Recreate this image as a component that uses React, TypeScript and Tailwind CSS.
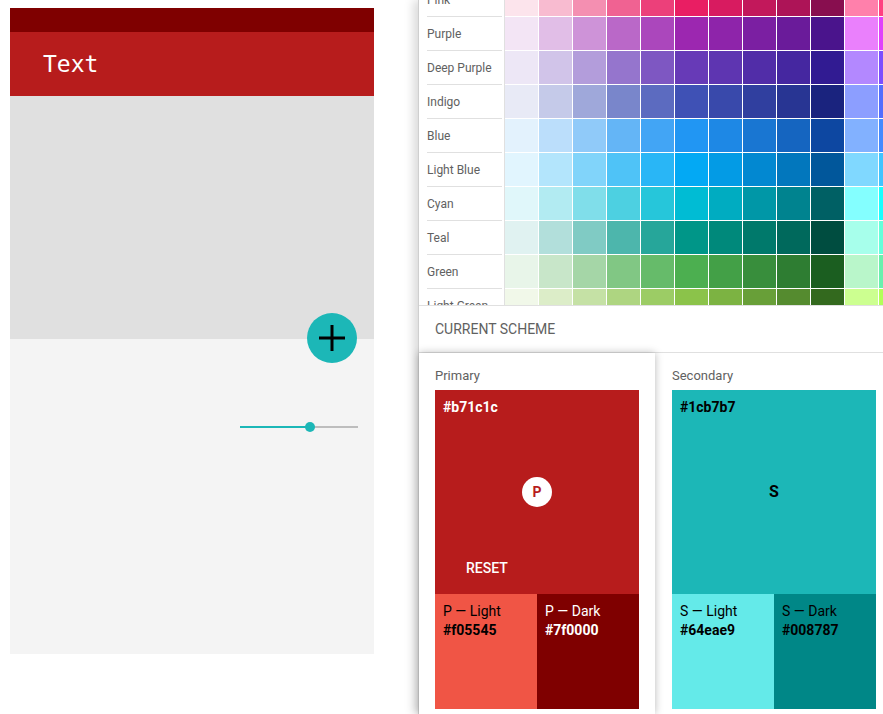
const palette: [string, string[]][] = [
  ["Pink", ["#fce4ec", "#f8bbd0", "#f48fb1", "#f06292", "#ec407a", "#e91e63", "#d81b60", "#c2185b", "#ad1457", "#880e4f", "#ff80ab", "#ff4081"]],
  ["Purple", ["#f3e5f5", "#e1bee7", "#ce93d8", "#ba68c8", "#ab47bc", "#9c27b0", "#8e24aa", "#7b1fa2", "#6a1b9a", "#4a148c", "#ea80fc", "#e040fb"]],
  ["Deep Purple", ["#ede7f6", "#d1c4e9", "#b39ddb", "#9575cd", "#7e57c2", "#673ab7", "#5e35b1", "#512da8", "#4527a0", "#311b92", "#b388ff", "#7c4dff"]],
  ["Indigo", ["#e8eaf6", "#c5cae9", "#9fa8da", "#7986cb", "#5c6bc0", "#3f51b5", "#3949ab", "#303f9f", "#283593", "#1a237e", "#8c9eff", "#536dfe"]],
  ["Blue", ["#e3f2fd", "#bbdefb", "#90caf9", "#64b5f6", "#42a5f5", "#2196f3", "#1e88e5", "#1976d2", "#1565c0", "#0d47a1", "#82b1ff", "#448aff"]],
  ["Light Blue", ["#e1f5fe", "#b3e5fc", "#81d4fa", "#4fc3f7", "#29b6f6", "#03a9f4", "#039be5", "#0288d1", "#0277bd", "#01579b", "#80d8ff", "#40c4ff"]],
  ["Cyan", ["#e0f7fa", "#b2ebf2", "#80deea", "#4dd0e1", "#26c6da", "#00bcd4", "#00acc1", "#0097a7", "#00838f", "#006064", "#84ffff", "#18ffff"]],
  ["Teal", ["#e0f2f1", "#b2dfdb", "#80cbc4", "#4db6ac", "#26a69a", "#009688", "#00897b", "#00796b", "#00695c", "#004d40", "#a7ffeb", "#64ffda"]],
  ["Green", ["#e8f5e9", "#c8e6c9", "#a5d6a7", "#81c784", "#66bb6a", "#4caf50", "#43a047", "#388e3c", "#2e7d32", "#1b5e20", "#b9f6ca", "#69f0ae"]],
  ["Light Green", ["#f1f8e9", "#dcedc8", "#c5e1a5", "#aed581", "#9ccc65", "#8bc34a", "#7cb342", "#689f38", "#558b2f", "#33691e", "#ccff90", "#b2ff59"]],
];

function Phone() {
  return (
    <div className="relative w-[364px] h-[646px] flex flex-col bg-[#f4f4f4]">
      <div className="h-[24px] bg-[#7f0000]" />
      <div className="h-[64px] bg-[#b71c1c] flex items-center pl-[33px] text-white text-[23px] font-['DejaVu_Sans_Mono',monospace]">
        Text
      </div>
      <div className="h-[243px] bg-[#e0e0e0]" />
      <div className="flex justify-end pr-[16px] pt-[82px]">
        <div className="relative w-[118px] h-[12px] flex items-center">
          <div className="h-[2px] w-[70px] bg-[#1cb7b7]" />
          <div className="h-[2px] flex-1 bg-[#bdbdbd]" />
          <div className="absolute left-[65px] top-[1px] w-[10px] h-[10px] rounded-full bg-[#1cb7b7]" />
        </div>
      </div>
      <button className="absolute right-[17px] top-[305px] w-[50px] h-[50px] rounded-full bg-[#1cb7b7] flex items-center justify-center">
        <svg width="26" height="26" viewBox="0 0 26 26">
          <path d="M13 0v26M0 13h26" stroke="#000" strokeWidth="3" />
        </svg>
      </button>
    </div>
  );
}

type SwatchProps = {
  main: string;
  light: string;
  dark: string;
  letter: string;
  short: string;
  mainText: string;
  lightText: string;
  darkText: string;
  primary?: boolean;
};

function Swatch({ main, light, dark, letter, short, mainText, lightText, darkText, primary }: SwatchProps) {
  return (
    <div className="w-[204px]">
      <div className="relative h-[204px] p-2" style={{ backgroundColor: main, color: mainText }}>
        <div className="text-[14px] font-bold leading-[18px]">{main}</div>
        <div className="absolute inset-0 flex items-center justify-center">
          {primary ? (
            <div className="w-[30px] h-[30px] rounded-full bg-white flex items-center justify-center text-[14px] font-bold text-[#b71c1c]">
              {letter}
            </div>
          ) : (
            <div className="text-[16px] font-bold">{letter}</div>
          )}
        </div>
        {primary && (
          <div className="absolute left-[31px] top-[169px] text-[14px] font-medium leading-[18px] text-white">RESET</div>
        )}
      </div>
      <div className="flex h-[115px]">
        <div className="w-[102px] px-2 pt-2 text-[14px] leading-[19px]" style={{ backgroundColor: light, color: lightText }}>
          <div>{short} — Light</div>
          <div className="font-bold">{light}</div>
        </div>
        <div className="w-[102px] px-2 pt-2 text-[14px] leading-[19px]" style={{ backgroundColor: dark, color: darkText }}>
          <div>{short} — Dark</div>
          <div className="font-bold">{dark}</div>
        </div>
      </div>
    </div>
  );
}

export default function App() {
  return (
    <div className="flex w-[883px] h-[714px] overflow-hidden bg-white font-['Roboto',sans-serif]">
      <div className="pl-[10px] pt-[8px] w-[418px] shrink-0">
        <Phone />
      </div>
      <div className="relative flex-1 min-w-0 flex flex-col bg-white border-l border-[#cfcfcf] shadow-[-5px_0_9px_rgba(0,0,0,0.14)]">
        <div className="h-[306px] shrink-0 overflow-hidden border-b border-[#e0e0e0]">
          <div className="flex mt-[-17px]">
            <div className="flex flex-col pl-[8px] pr-[2px] border-r border-[#e0e0e0] shrink-0">
              {palette.map(([name]) => (
                <div key={name} className="w-[75px] h-[34px] border-b border-[#e0e0e0] flex items-center text-[12px] text-[#616161]">
                  {name}
                </div>
              ))}
            </div>
            <div className="flex flex-col gap-[1px]">
              {palette.map(([name, shades]) => (
                <div key={name} className="flex gap-[1px]">
                  {shades.map((c) => (
                    <div key={c} className="w-[33px] h-[33px] shrink-0" style={{ backgroundColor: c }} />
                  ))}
                </div>
              ))}
            </div>
          </div>
        </div>
        <div className="h-[47px] shrink-0 flex items-center pl-[16px] pt-[1px] text-[14px] text-[#616161] border-b border-[#e0e0e0]">
          CURRENT SCHEME
        </div>
        <div className="flex flex-1">
          <div className="relative z-10 w-[236px] shrink-0 pl-[16px] pt-[13px] bg-white shadow-[0_0_8px_rgba(0,0,0,0.28)]">
            <div className="text-[13px] leading-[20px] text-[#616161] mb-[4px]">Primary</div>
            <Swatch main="#b71c1c" light="#f05545" dark="#7f0000" letter="P" short="P" mainText="#ffffff" lightText="#000000" darkText="#ffffff" primary />
          </div>
          <div className="pl-[17px] pt-[13px] shrink-0">
            <div className="text-[13px] leading-[20px] text-[#616161] mb-[4px]">Secondary</div>
            <Swatch main="#1cb7b7" light="#64eae9" dark="#008787" letter="S" short="S" mainText="#000000" lightText="#000000" darkText="#000000" />
          </div>
        </div>
      </div>
    </div>
  );
}
